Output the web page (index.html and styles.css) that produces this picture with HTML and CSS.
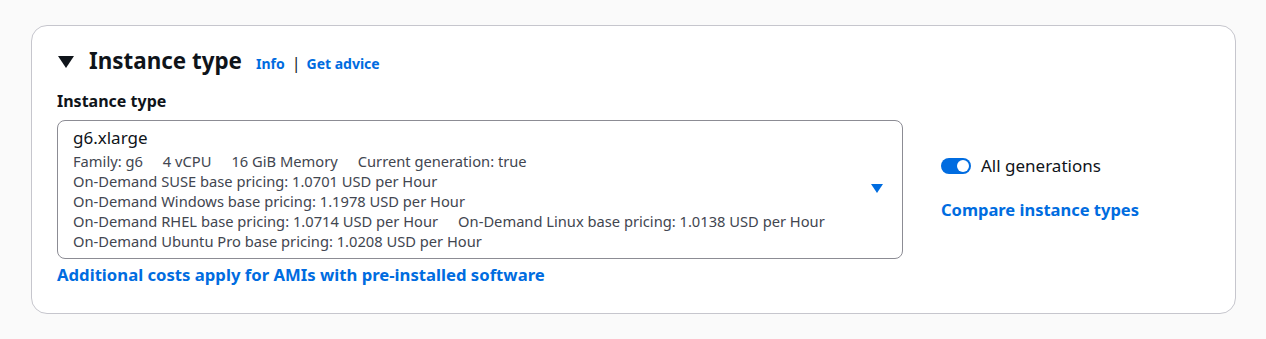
FILE: index.html
```html
<!DOCTYPE html>
<html>
    <head>
        <meta charset = utf-8>
        <title>Instance type</title>
        <link rel="stylesheet" href="styles.css">
    </head>

    <body>
        <div class = card>
            <div class = head>
                <span class = caret></span>
                <h2>Instance type</h2>
                <a class = info href = #>Info</a>
                <span class = bar>|</span>
                <a class = info href = #>Get advice</a>
            </div>

            <div class = label>Instance type</div>

            <div class = row>
                <div class = left>
                    <div class = select>
                        <div class = lines>
                            <div class = name>g6.xlarge</div>
                            <div class = meta><span>Family: g6</span><span>4 vCPU</span><span>16 GiB Memory</span><span>Current generation: true</span></div>
                            <div class = meta><span>On-Demand SUSE base pricing: 1.0701 USD per Hour</span></div>
                            <div class = meta><span>On-Demand Windows base pricing: 1.1978 USD per Hour</span></div>
                            <div class = meta><span>On-Demand RHEL base pricing: 1.0714 USD per Hour</span><span>On-Demand Linux base pricing: 1.0138 USD per Hour</span></div>
                            <div class = meta><span>On-Demand Ubuntu Pro base pricing: 1.0208 USD per Hour</span></div>
                        </div>
                        <span class = arrow></span>
                    </div>
                    <a class = link href = #>Additional costs apply for AMIs with pre-installed software</a>
                </div>

                <div class = right>
                    <div class = toggle><span class = switch></span>All generations</div>
                    <a class = link href = #>Compare instance types</a>
                </div>
            </div>
        </div>
    </body>
</html>
```

FILE: styles.css
```css
html {
    background-color: #fafafa;
    font-family: "Noto Sans", "Open Sans", sans-serif;
}

body {
    margin: 0;
    color: #0f141a;
}

a {
    color: #006ce0;
    font-weight: bold;
    text-decoration: none
}

.card {
    margin: 25px 30px 25px 31px;
    background: #fff;
    border: 1px solid #c6c6cd;
    border-radius: 16px;
    padding: 19px 26px 25px 25px;
    height: 243px;
    box-sizing: content-box
}

.head {
    display: flex;
    align-items: baseline;
    height: 32px;
}

.caret {
    width: 0;
    height: 0;
    border-left: 8px solid transparent;
    border-right: 8px solid transparent;
    border-top: 12px solid #0f141a;
    margin: 0 15px 0 1px;
    align-self: center;
    position: relative;
    top: 1px
}

h2 {
    margin: 0;
    font-size: 22.4px;
    font-weight: bold;
}

.info {
    font-size: 14px;
    margin-left: 14px
}

.bar {
    font-size: 16px;
    margin: 0 6px 0 7px
}

.bar + .info {margin-left: 0}

.label {
    font-size: 16px;
    font-weight: bold;
    margin: 13px 0 8px 0;
    line-height: 22px
}

.row {
    display: grid;
    grid-template-columns: 846px 1fr;
    gap: 38px
}

.select {
    display: flex;
    align-items: center;
    border: 1px solid #8c8c94;
    border-radius: 8px;
    padding: 5px 19px 7px 15px;
    height: 125px
}

.lines {flex: 1}

.name {
    font-size: 17px;
    line-height: 23px;
    margin-bottom: 2px
}

.meta {
    font-size: 14.7px;
    line-height: 20px;
    color: #424650
}

.meta span {margin-right: 20px}

.arrow {
    width: 0;
    height: 0;
    border-left: 6px solid transparent;
    border-right: 6px solid transparent;
    border-top: 9px solid #006ce0
}

.left .link {
    display: block;
    margin-top: 5px;
    font-size: 16.7px;
    line-height: 22px
}

.right {padding-top: 35px}

.toggle {
    display: flex;
    align-items: center;
    gap: 10px;
    font-size: 17px;
    line-height: 22px;
    margin-bottom: 22px
}

.switch {
    width: 30px;
    height: 16px;
    border-radius: 8px;
    background: #006ce0;
    position: relative
}

.switch::after {
    content: "";
    position: absolute;
    right: 2px;
    top: 2px;
    width: 12px;
    height: 12px;
    border-radius: 50%;
    background: #fff
}

.right .link {
    font-size: 16.5px;
    line-height: 22px
}
```
